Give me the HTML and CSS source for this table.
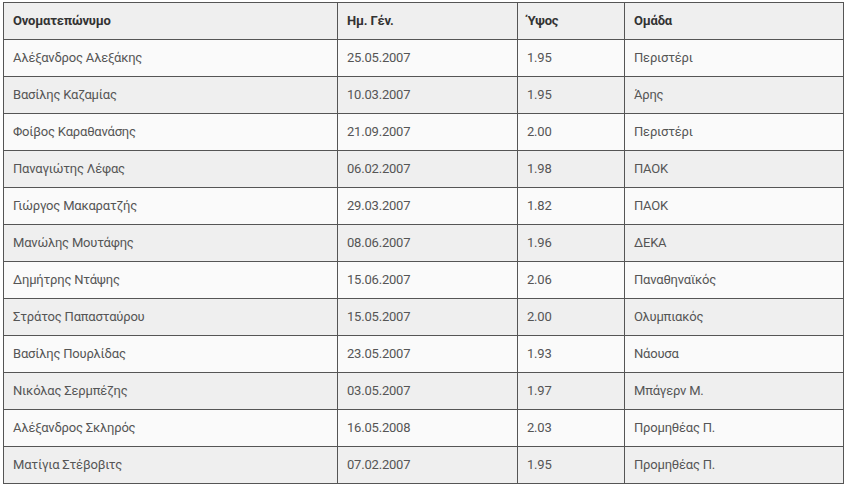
FILE: index.html
```html
<!DOCTYPE html>
<html lang="el">
<head>
<meta charset="utf-8">
<link rel="stylesheet" href="styles.css">
</head>
<body>
<table class="roster">
<colgroup>
<col class="c-name"><col class="c-date"><col class="c-height"><col class="c-team">
</colgroup>
<thead>
<tr><th>Ονοματεπώνυμο</th><th>Ημ. Γέν.</th><th>Ύψος</th><th>Ομάδα</th></tr>
</thead>
<tbody>
<tr><td>Αλέξανδρος Αλεξάκης</td><td>25.05.2007</td><td>1.95</td><td>Περιστέρι</td></tr>
<tr><td>Βασίλης Καζαμίας</td><td>10.03.2007</td><td>1.95</td><td>Άρης</td></tr>
<tr><td>Φοίβος Καραθανάσης</td><td>21.09.2007</td><td>2.00</td><td>Περιστέρι</td></tr>
<tr><td>Παναγιώτης Λέφας</td><td>06.02.2007</td><td>1.98</td><td>ΠΑΟΚ</td></tr>
<tr><td>Γιώργος Μακαρατζής</td><td>29.03.2007</td><td>1.82</td><td>ΠΑΟΚ</td></tr>
<tr><td>Μανώλης Μουτάφης</td><td>08.06.2007</td><td>1.96</td><td>ΔΕΚΑ</td></tr>
<tr><td>Δημήτρης Ντάψης</td><td>15.06.2007</td><td>2.06</td><td>Παναθηναϊκός</td></tr>
<tr><td>Στράτος Παπασταύρου</td><td>15.05.2007</td><td>2.00</td><td>Ολυμπιακός</td></tr>
<tr><td>Βασίλης Πουρλίδας</td><td>23.05.2007</td><td>1.93</td><td>Νάουσα</td></tr>
<tr><td>Νικόλας Σερμπέζης</td><td>03.05.2007</td><td>1.97</td><td>Μπάγερν Μ.</td></tr>
<tr><td>Αλέξανδρος Σκληρός</td><td>16.05.2008</td><td>2.03</td><td>Προμηθέας Π.</td></tr>
<tr><td>Ματίγια Στέβοβιτς</td><td>07.02.2007</td><td>1.95</td><td>Προμηθέας Π.</td></tr>
</tbody>
</table>
</body>
</html>
```
FILE: styles.css
```css
html, body {
  margin: 0;
  background: #ffffff;
}
body {
  padding: 2px 0 0 3px;
  font-family: Roboto, "Noto Sans", sans-serif;
  font-size: 13px;
  letter-spacing: -0.2px;
  color: #555555;
}
.roster {
  border-collapse: collapse;
  table-layout: fixed;
  width: 841px;
}
.c-name { width: 334px; }
.c-date { width: 180px; }
.c-height { width: 107px; }
.c-team { width: auto; }
.roster th,
.roster td {
  border: 1px solid #555555;
  height: 37px;
  padding: 0 0 1px 9px;
  text-align: left;
  vertical-align: middle;
  box-sizing: border-box;
  white-space: nowrap;
}
.roster th {
  font-weight: 700;
  color: #333333;
  background: #efefef;
}
.roster tbody tr:nth-child(odd) td {
  background: #fafafa;
}
.roster tbody tr:nth-child(even) td {
  background: #efefef;
}
```
